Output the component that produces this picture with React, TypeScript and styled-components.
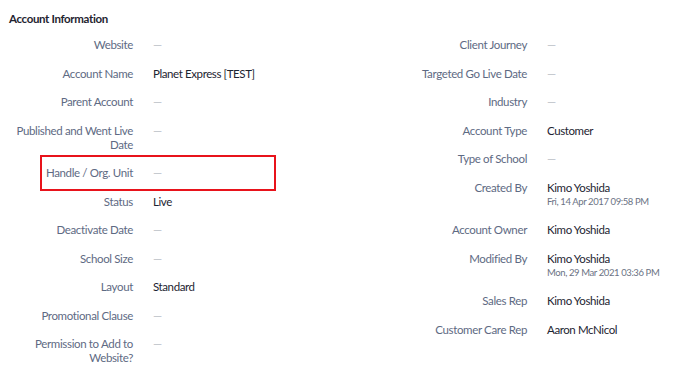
import React from "react";
import styled, { createGlobalStyle, css } from "styled-components";

const GlobalStyle = createGlobalStyle`
  body {
    margin: 0;
    background: #fff;
    font-family: Lato, "Open Sans", sans-serif;
    -webkit-font-smoothing: antialiased;
  }
`;

const Section = styled.section`
  padding: 12px 0 0 9px;
  width: 700px;
  box-sizing: border-box;
`;

const Title = styled.h3`
  margin: 0 0 5px;
  font-size: 11.5px;
  letter-spacing: -0.35px;
  line-height: 14px;
  font-weight: 700;
  color: #1f2430;
`;

const Columns = styled.div`
  display: flex;
`;

const Column = styled.div<{ $width: number; $labelWidth: number; $gap: number }>`
  width: ${(p) => p.$width}px;
  display: grid;
  grid-template-columns: ${(p) => p.$labelWidth}px 1fr;
  column-gap: ${(p) => p.$gap}px;
  align-content: start;
`;

const Row = styled.div`
  display: contents;
`;

const Label = styled.div<{ $highlight?: boolean }>`
  position: relative;
  padding: 7px 0 7.5px;
  font-size: 11.5px;
  letter-spacing: -0.35px;
  line-height: 14px;
  text-align: right;
  color: #5e6a83;

  ${(p) =>
    p.$highlight &&
    css`
      &::after {
        content: "";
        position: absolute;
        left: 31px;
        top: -4px;
        width: 232px;
        height: 32px;
        border: 2px solid #e8131b;
      }
    `}
`;

const Value = styled.div`
  padding: 7px 0 7.5px;
  font-size: 11.5px;
  letter-spacing: -0.4px;
  line-height: 14px;
  color: #1d2431;
`;

const Empty = styled.span`
  color: #b9bec7;
`;

const Sub = styled.div`
  font-size: 9.5px;
  letter-spacing: -0.4px;
  line-height: 14px;
  color: #6b7384;
`;

type Field = { label: string; value?: string; sub?: string; highlight?: boolean };

const left: Field[] = [
  { label: "Website" },
  { label: "Account Name", value: "Planet Express [TEST]" },
  { label: "Parent Account" },
  { label: "Published and Went Live Date" },
  { label: "Handle / Org. Unit", highlight: true },
  { label: "Status", value: "Live" },
  { label: "Deactivate Date" },
  { label: "School Size" },
  { label: "Layout", value: "Standard" },
  { label: "Promotional Clause" },
  { label: "Permission to Add to Website?" },
];

const right: Field[] = [
  { label: "Client Journey" },
  { label: "Targeted Go Live Date" },
  { label: "Industry" },
  { label: "Account Type", value: "Customer" },
  { label: "Type of School" },
  { label: "Created By", value: "Kimo Yoshida", sub: "Fri, 14 Apr 2017 09:58 PM" },
  { label: "Account Owner", value: "Kimo Yoshida" },
  { label: "Modified By", value: "Kimo Yoshida", sub: "Mon, 29 Mar 2021 03:36 PM" },
  { label: "Sales Rep", value: "Kimo Yoshida" },
  { label: "Customer Care Rep", value: "Aaron McNicol" },
];

function Fields({ items }: { items: Field[] }) {
  return (
    <>
      {items.map((f) => (
        <Row key={f.label}>
          <Label $highlight={f.highlight}>{f.label}</Label>
          <Value>
            {f.value ? f.value : <Empty>—</Empty>}
            {f.sub && <Sub>{f.sub}</Sub>}
          </Value>
        </Row>
      ))}
    </>
  );
}

export default function App() {
  return (
    <>
      <GlobalStyle />
      <Section>
        <Title>Account Information</Title>
        <Columns>
          <Column $width={341} $labelWidth={124} $gap={20}>
            <Fields items={left} />
          </Column>
          <Column $width={350} $labelWidth={177} $gap={20}>
            <Fields items={right} />
          </Column>
        </Columns>
      </Section>
    </>
  );
}
